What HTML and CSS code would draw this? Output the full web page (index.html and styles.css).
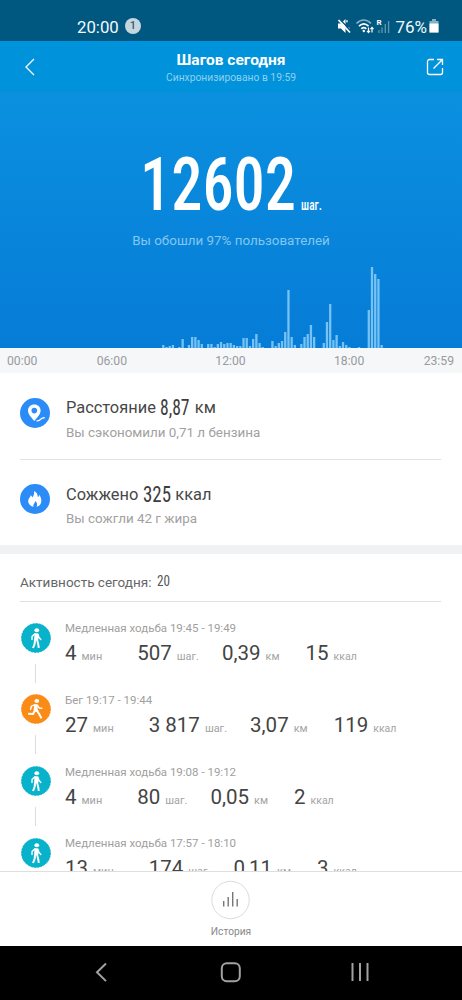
FILE: index.html
```html
<!DOCTYPE html>
<html lang="ru">
<head>
<meta charset="utf-8">
<title>Шагов сегодня</title>
<link rel="stylesheet" href="styles.css">
</head>
<body>
<svg class="defs" aria-hidden="true">
  <symbol id="walk" viewBox="0 0 30 30">
    <circle cx="15" cy="15" r="14.6" fill="#08b2cb"/>
    <circle cx="15" cy="15" r="14.4" fill="none" stroke="#08b2cb" stroke-width=".8" stroke-dasharray="2 1.2"/>
    <ellipse cx="15.8" cy="7.200" rx="2.400" ry="2" fill="#fff"/>
    <path d="M13.500 10.200h3.200l1 4.200-.6 3.200H13z" fill="#fff"/>
    <path d="M13.700 10.900l-2.600 2.500-.1 3.200M17 11.300l.9 3 1.900 2.200" fill="none" stroke="#fff" stroke-width="1.400" stroke-linecap="round"/>
    <path d="M14 17.200l-.4 3.800-1.600 4M16.100 17l1 3.600.7 4.300" fill="none" stroke="#fff" stroke-width="2"/>
  </symbol>
  <symbol id="run" viewBox="0 0 30 30">
    <circle cx="15" cy="15" r="14.600" fill="#fb8b17"/>
    <circle cx="15" cy="15" r="14.400" fill="none" stroke="#fb8b17" stroke-width=".8" stroke-dasharray="2 1.200"/>
    <ellipse cx="15.800" cy="7" rx="2.400" ry="2.100" fill="#fff"/>
    <path d="M13.200 10.200h3.600l-.2 4.600 1.200 3-3.600.2-1.600-2.200z" fill="#fff"/>
    <path d="M13.600 10.800l-3.200 1.400-.8 3M16.600 11.600l1.700 2.400 2.600.2" fill="none" stroke="#fff" stroke-width="1.400" stroke-linecap="round"/>
    <path d="M13.700 16.800l-1.600 3.200-4.900-.2M16 17l2.200 3 2.200 4.400" fill="none" stroke="#fff" stroke-width="2"/>
  </symbol>
</svg>
<div class="phone">
  <div class="status">
    <span class="clock">20:00</span><span class="badge">1</span>
    <svg class="status-icons" width="54" height="20" viewBox="0 0 54 20" fill="none">
      <path d="M1 7.500h3L8.500 3v14L4 12.500H1z" fill="#fff"/>
      <path d="M10 6.200v-2M11 11.500l1.600 1.200" stroke="#fff" stroke-width="1.400"/>
      <path d="M2.500 3l11.500 12" stroke="#005880" stroke-width="1.500"/>
      <path d="M1.500 4l11.500 12.500" stroke="#fff" stroke-width="1.700"/>
      <path d="M19.500 7.500c4.500-4.500 10-4.500 14.500 0" stroke="#84b1c5" stroke-width="1.600"/>
      <path d="M22 10.200c3-3 6.600-3 9.600 0M24.300 12.800c1.600-1.500 3.400-1.500 5 0" stroke="#fff" stroke-width="1.700"/>
      <circle cx="26.800" cy="15" r="1.200" fill="#fff"/>
      <path d="M31.500 11.500v5m-1.500-1.600l1.500 1.700 1.500-1.700M35 16.500v-5m-1.500 1.600l1.500-1.700 1.500 1.700" stroke="#fff" stroke-width="1.200"/>
      <path d="M42 17v-3M45 17v-5.500M48.300 17V8M51.600 17V5" stroke="#5e98b1" stroke-width="1.300"/>
      <text x="39.500" y="8.500" class="roam">R</text>
    </svg>
    <span class="percent">76%</span>
    <svg class="battery" width="10" height="14" viewBox="0 0 10 14"><path d="M3 0h4v2h2.500v11.500h-9V2H3z" fill="#83b2c6"/><path d="M.5 4.500h9v9h-9z" fill="#fff"/></svg>
  </div>

  <header class="header">
    <svg class="back" width="12" height="18" viewBox="0 0 12 18"><path d="M10 1L2 9l8 8" fill="none" stroke="#fff" stroke-width="1.300"/></svg>
    <div class="heading">
      <h1 class="title">Шагов сегодня</h1>
      <p class="sync">Синхронизировано в 19:59</p>
    </div>
    <svg class="share" width="18" height="18" viewBox="0 0 18 18" fill="none" stroke="#fff" stroke-width="1.300"><path d="M8 1.500H3.500a2 2 0 0 0-2 2v11a2 2 0 0 0 2 2h11a2 2 0 0 0 2-2V10M7.500 10.500L16 2M11 1.500h5.500V7"/></svg>
  </header>

  <section class="hero">
    <svg class="total" width="190" height="62" viewBox="0 0 190 62">
      <text class="total-value" x="0" y="58" textLength="156" lengthAdjust="spacingAndGlyphs">12602</text>
      <text class="total-unit" x="161" y="58" textLength="21" lengthAdjust="spacingAndGlyphs">шаг.</text>
    </svg>
    <p class="rank">Вы обошли 97% пользователей</p>
    <svg class="chart" width="462" height="82" viewBox="0 0 462 82">
      <path transform="translate(-.5 0) scale(1.003 1)" d="M163.300 82v-3m3.200 3v-1m3.200 1v-2m3.200 2v-3m6.400 3v-1m3.300 1v-9m6.300 9v-3m3.200 3v-11m3.200 11v-11m3.200 11v-8m3.200 8v-4m6.400 4v-4m3.200 4v-4m3.200 4v-1m3.200 1v-4m3.200 4v-6m3.200 6v-4m3.200 4v-5m3.200 5v-5m3.200 5v-3m3.200 3v-2m3.200 2v-2m3.200 2v-10m3.200 10v-10m3.200 10v-2m3.200 2v-9m3.200 9v-14m3.200 14v-5m3.200 5v-1m9.600 1v-7m3.200 7v-2m3.200 2v-5m3.200 5v-7m3.200 7v-16m3.200 16v-58m3.200 58v-11m3.200 11v-3m6.400 3v-4m3.200 4v-11m3.200 11v-14m3.200 14v-23m3.200 23v-11m9.600 11v-5m3.200 5v-26m3.200 26v-44m3.200 44v-8m3.200 8v-13m3.200 13v-2m3.200 2v-6m3.200 6v-3m3.200 3v-1m9.600 1v-1m9.700 1v-38m3.200 38v-81m3.200 81v-74m3.200 74v-69m3.200 69v-3" fill="none" stroke="#75c2f3" stroke-width="2.300"/>
    </svg>
  </section>

  <div class="axis"><span>00:00</span><span>06:00</span><span>12:00</span><span>18:00</span><span>23:59</span></div>

  <section class="stats">
    <div class="stat">
      <svg class="stat-icon" width="30" height="30" viewBox="0 0 30 30"><circle cx="15" cy="15" r="15" fill="#2b8cf7"/><path fill-rule="evenodd" d="M14.300 6.500c3.700 0 6.300 2.600 6.300 6 0 3.700-3.200 6.700-6.300 10.600-3.100-3.900-6.300-6.900-6.300-10.600 0-3.400 2.600-6 6.300-6zm0 3.300a2.800 2.800 0 1 0 0 5.600 2.800 2.800 0 0 0 0-5.600z" fill="#fff"/><path d="M16.500 22.800c2.500.5 3.200-.2 4.300-1.600 1-1.300 2-1.500 4-1.600" fill="none" stroke="#fff" stroke-width="1.200"/></svg>
      <div class="stat-body">
        <div class="stat-title"><span>Расстояние</span><svg class="num" width="30" height="24" viewBox="0 0 30 24"><text x="0" y="19.500" textLength="29.500" lengthAdjust="spacingAndGlyphs">8,87</text></svg><span>км</span></div>
        <p class="stat-note">Вы сэкономили 0,71 л бензина</p>
      </div>
    </div>
    <div class="stat">
      <svg class="stat-icon" width="30" height="30" viewBox="0 0 30 30"><circle cx="15" cy="15" r="15" fill="#2b8cf7"/><path d="M14.100 7c3.500 2 3.400 4 3.900 6.200.8-.7 1.200-1.500 1.200-2.500 4.200 5.500 1.700 11.700-2.600 12 1.300-2.400.1-4.400-1.300-5.700-.3 2.300-2.400 3-1.800 5.700-5.400-1-6.700-6.400-3.700-9.500.6-.6.8-1 .9-1.900 1 .5 1.300 1.200 1.500 2.200 1.700-1.700 2.200-3.800 1.900-6.500z" fill="#fff"/></svg>
      <div class="stat-body">
        <div class="stat-title"><span>Сожжено</span><svg class="num" width="28" height="24" viewBox="0 0 28 24"><text x="0" y="19.500" textLength="28" lengthAdjust="spacingAndGlyphs">325</text></svg><span>ккал</span></div>
        <p class="stat-note">Вы сожгли 42 г жира</p>
      </div>
    </div>
  </section>

  <section class="activity">
    <h2 class="activity-head"><span>Активность сегодня:</span><svg width="14" height="18" viewBox="0 0 14 18"><text class="count" x="0" y="14" textLength="13" lengthAdjust="spacingAndGlyphs">20</text></svg></h2>
    <div class="item">
      <div class="rail"><svg class="item-icon" width="30" height="30"><use href="#walk"/></svg></div>
      <div class="item-body">
        <p class="item-title">Медленная ходьба 19:45 - 19:49</p>
        <div class="values"><b>4</b><i class="min">мин</i><b>507</b><i class="steps">шаг.</i><b>0,39</b><i class="km">км</i><b>15</b><i class="kcal">ккал</i></div>
      </div>
    </div>
    <div class="item">
      <div class="rail"><svg class="item-icon" width="30" height="30"><use href="#run"/></svg></div>
      <div class="item-body">
        <p class="item-title">Бег 19:17 - 19:44</p>
        <div class="values"><b>27</b><i class="min">мин</i><b>3 817</b><i class="steps">шаг.</i><b>3,07</b><i class="km">км</i><b>119</b><i class="kcal">ккал</i></div>
      </div>
    </div>
    <div class="item">
      <div class="rail"><svg class="item-icon" width="30" height="30"><use href="#walk"/></svg></div>
      <div class="item-body">
        <p class="item-title">Медленная ходьба 19:08 - 19:12</p>
        <div class="values"><b>4</b><i class="min">мин</i><b>80</b><i class="steps">шаг.</i><b>0,05</b><i class="km">км</i><b>2</b><i class="kcal">ккал</i></div>
      </div>
    </div>
    <div class="item">
      <div class="rail"><svg class="item-icon" width="30" height="30"><use href="#walk"/></svg></div>
      <div class="item-body">
        <p class="item-title">Медленная ходьба 17:57 - 18:10</p>
        <div class="values"><b>13</b><i class="min">мин</i><b>174</b><i class="steps">шаг.</i><b>0,11</b><i class="km">км</i><b>3</b><i class="kcal">ккал</i></div>
      </div>
    </div>
  </section>

  <footer class="footer">
    <svg width="40" height="40" viewBox="0 0 40 40" fill="none"><circle cx="19.500" cy="20" r="18.700" stroke="#dcdcdc"/><path d="M12.700 26.500v-5.500M17.200 26.500V17M21.700 26.500V12M26.200 26.500V19" stroke="#777" stroke-width="1.400"/></svg>
    <span class="history">История</span>
  </footer>

  <nav class="nav">
    <svg width="462" height="54" viewBox="0 0 462 54" fill="none" stroke="#a2a2a2" stroke-width="2"><path d="M106 17.500l-9 8.800 9 8.800"/><rect x="221.800" y="17.300" width="18" height="18" rx="5"/><path d="M352.500 17v18M360 17v18M367.500 17v18"/></svg>
  </nav>
</div>
</body>
</html>
```
FILE: styles.css
```css
* { box-sizing: border-box; margin: 0; padding: 0; }
body { width: 462px; height: 1000px; overflow: hidden; font-family: Roboto, "Liberation Sans", sans-serif; background: #fff; }
svg { display: block; flex: none; overflow: visible; }
.defs { position: absolute; width: 0; height: 0; }
.phone { display: flex; flex-direction: column; height: 1000px; }

.status { display: flex; align-items: center; height: 41px; padding: 12px 23px 0 77px; background: #005880; color: #f2f9fc; flex: none; }
.clock { font-size: 16.800px; line-height: 20px; }
.badge { width: 16px; height: 16px; margin: -1px 0 0 6px; border-radius: 50%; background: #c4d6df; color: #3d5763; font-size: 11px; font-weight: 500; line-height: 16px; text-align: center; }
.status-icons { margin-left: auto; margin-top: -1px; }
.roam { font-size: 8px; font-weight: 700; fill: #fff; }
.percent { margin-left: 4px; font-size: 17px; line-height: 20px; }
.battery { margin: -1px 0 0 2px; }

.header { display: flex; justify-content: space-between; height: 51px; padding: 9px 18px 0 24px; background: #0092da; color: #fff; flex: none; }
.back { margin-top: 8px; }
.share { margin-top: 8px; }
.heading { text-align: center; }
.title { font-size: 15.500px; font-weight: 700; line-height: 20px; }
.sync { font-size: 10.300px; line-height: 15px; color: #8fd0f2; }

.hero { display: flex; flex-direction: column; align-items: center; height: 256px; padding-top: 60px; background: linear-gradient(#0b90df, #067cd7); flex: none; }
.total { margin-left: 8px; }
.total text { fill: #fff; font-stretch: 75%; }
.total-value { font-size: 75px; font-weight: 500; }
.total-unit { font-size: 14px; font-weight: 500; }
.rank { margin-top: 19px; font-size: 13.400px; line-height: 16px; color: #84c7f1; }
.chart { margin-top: auto; }

.axis { display: flex; justify-content: space-between; height: 25px; padding: 0 8px 0 7px; background: #f5f7f9; font-size: 12.200px; line-height: 26px; color: #999b9e; flex: none; }
.axis span:nth-child(2) { margin-left: 30px; }
.axis span:nth-child(3) { margin-left: 59px; margin-right: 59px; }
.axis span:nth-child(4) { margin-right: 30px; }

.stats { height: 181px; padding: 0 21px 0 20px; border-bottom: 9px solid #eff1f2; flex: none; }
.stat { display: flex; height: 86px; padding-top: 20px; }
.stat + .stat { border-top: 1px solid #e2e2e2; padding-top: 19.500px; }
.stat-icon { margin: 4.500px 16px 0 0; }
.stat-title { display: flex; height: 26px; align-items: center; gap: 4.500px; margin-top: 2px; font-size: 16.400px; line-height: 26px; color: #484848; }
.num { margin-top: -2px; }
.num text { font-size: 22.500px; font-stretch: 75%; font-weight: 400; fill: #3c3c3c; }
.stat-note { margin-top: 3px; font-size: 13.400px; line-height: 18px; color: #a1a1a1; }
.stat + .stat .stat-note { margin-top: 2px; }

.activity { flex: 1; min-height: 0; padding: 0 21px 0 20px; overflow: hidden; }
.activity-head { display: flex; gap: 6px; height: 48px; padding-top: 18px; border-bottom: 1px solid #e0e0e0; font-size: 13.500px; font-weight: 400; line-height: 20px; color: #666; }
.count { font-size: 15.500px; font-stretch: 75%; fill: #555; }
.item { display: flex; height: 71.800px; }
.rail { width: 30px; margin: 20.500px 14.500px 0 .500px; height: 71.700px; flex: none; }
.rail::after { content: ""; display: block; width: 1px; height: 19px; margin: 11px 0 0 14.500px; background: #dcdcdc; }
.item:last-child .rail::after { display: none; }
.item-body { padding-top: 18px; }
.item-title { font-size: 11.500px; line-height: 16px; color: #a0a0a0; }
.values { display: flex; align-items: baseline; height: 30px; line-height: 34px; white-space: nowrap; }
.values b { font-size: 20.500px; font-weight: 400; color: #444; }
.values i { margin-left: 5px; font-size: 10.900px; font-style: normal; color: #a3a3a3; }
.min { margin-right: 35px; }
.steps { margin-right: 23px; }
.km { margin-right: 26px; }
.values .kcal { font-size: 10.500px; }

.footer { display: flex; flex-direction: column; align-items: center; height: 75px; padding-top: 8px; border-top: 1px solid #dedede; background: #fff; flex: none; }
.history { margin-top: 5px; font-size: 10.200px; line-height: 14px; color: #888; }
.nav { height: 54px; background: #000; flex: none; }
```
